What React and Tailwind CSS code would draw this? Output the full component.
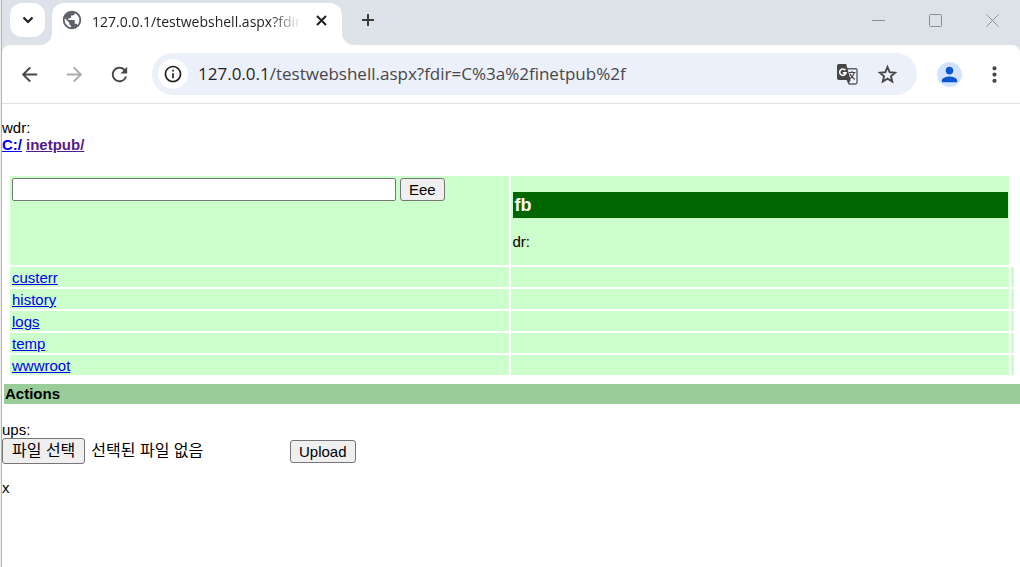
import { useRef } from "react";
import {
  MdArrowBack,
  MdArrowForward,
  MdInfoOutline,
  MdMoreVert,
  MdPerson,
  MdPublic,
  MdRefresh,
} from "react-icons/md";

const folders = ["custerr", "history", "logs", "temp", "wwwroot"];

const buttonClass =
  "rounded-[3px] border border-[#767676] bg-[#efefef] px-2 text-[15px] leading-[21px] text-black";

const windowButtons = [
  { label: "Minimize", path: "M1 7.5h13" },
  { label: "Maximize", path: "M2.5 1.5h10a1 1 0 0 1 1 1v10a1 1 0 0 1-1 1h-10a1 1 0 0 1-1-1v-10a1 1 0 0 1 1-1z" },
  { label: "Close", path: "M1.5 1.5l12 12M13.5 1.5l-12 12" },
];

function TabFoot({ className, path }) {
  return (
    <svg className={`absolute bottom-0 h-3 w-3 fill-white ${className}`} viewBox="0 0 12 12" aria-hidden="true">
      <path d={path} />
    </svg>
  );
}

function ChevronIcon() {
  return (
    <svg className="h-3 w-3 fill-none stroke-current" viewBox="0 0 12 12" strokeWidth="2.2">
      <path d="M1.5 3.5L6 8l4.5-4.5" />
    </svg>
  );
}

function CloseIcon() {
  return (
    <svg className="h-[17px] w-[17px] fill-none stroke-current" viewBox="0 0 17 17" strokeWidth="2">
      <path d="M4 4l9 9M13 4l-9 9" />
    </svg>
  );
}

function PlusIcon() {
  return (
    <svg className="h-5 w-5 fill-none stroke-current" viewBox="0 0 20 20" strokeWidth="2">
      <path d="M10 4v12M4 10h12" />
    </svg>
  );
}

function StarIcon() {
  return (
    <svg className="h-[23px] w-[23px] fill-none stroke-current" viewBox="0 0 24 24" strokeWidth="2">
      <path d="M12 4.300l2.200 5.300 5.700.500-4.300 3.700 1.300 5.600-4.900-3-4.900 3 1.300-5.600-4.300-3.700 5.700-.500z" />
    </svg>
  );
}

// solid page with the G on the left, outlined page with the character behind it
function TranslateIcon() {
  return (
    <svg className="h-[21px] w-[21px]" viewBox="0 0 21 21" fill="none">
      <path d="M10 4.7h8.6a1.4 1.4 0 0 1 1.4 1.4v12.5a1.4 1.4 0 0 1-1.4 1.4h-6.4L10 15.5" stroke="#5f6163" strokeWidth="1.4" />
      <path d="M1.8 0h7.4l4.4 16H1.8A1.8 1.8 0 0 1 0 14.2V1.8A1.8 1.8 0 0 1 1.8 0z" fill="#474747" />
      <path d="M10.2 16h3.4l-2.2 4z" fill="#474747" />
      <path d="M8.4 6.2A3.2 3.2 0 1 0 9 8.9H5.9" stroke="#fff" strokeWidth="1.6" />
      <path d="M11.8 8.5h6.7M15 7v1.5M17.2 8.600c-.6 2.600-2 4.600-4.200 6.200M12.900 9.800c1 2.300 2.600 4 4.900 5.600" stroke="#474747" strokeWidth="1.2" />
    </svg>
  );
}

function TabStrip() {
  return (
    <div className="flex h-[45px] items-start bg-[#dde1e8] pt-[3px]">
      <button
        type="button"
        aria-label="Search tabs"
        className="ml-2 grid h-[34px] w-[35px] place-items-center rounded-xl bg-white text-[#1f1f1f]"
      >
        <ChevronIcon />
      </button>

      <div className="relative ml-[7px] flex h-[42px] w-[290px] items-start rounded-t-xl bg-white pl-[9px] pr-3 pt-[6px]">
        <TabFoot className="-left-3" path="M12 0v12H0A12 12 0 0 0 12 0z" />
        <TabFoot className="-right-3" path="M0 0v12h12A12 12 0 0 1 0 0z" />
        <MdPublic size={22} className="shrink-0 text-[#5f6368]" />
        <span className="ml-[9px] min-w-0 flex-1 overflow-hidden whitespace-nowrap pt-[3px] font-['Open_Sans','Noto_Sans',sans-serif] text-sm leading-5 text-[#1f1f1f] [mask-image:linear-gradient(to_right,black_85%,transparent)]">
          127.0.0.1/testwebshell.aspx?fdir
        </span>
        <button type="button" aria-label="Close tab" className="ml-3 mt-[3px] text-[#1f1f1f]">
          <CloseIcon />
        </button>
      </div>

      <button type="button" aria-label="New tab" className="ml-4 mt-[7px] text-[#3c3c3c]">
        <PlusIcon />
      </button>

      <div className="ml-auto mr-5 mt-[10px] flex gap-[42px]">
        {windowButtons.map((item) => (
          <button key={item.label} type="button" aria-label={item.label}>
            <svg className="h-[15px] w-[15px] fill-none stroke-[#8b8e92]" viewBox="0 0 15 15">
              <path d={item.path} />
            </svg>
          </button>
        ))}
      </div>
    </div>
  );
}

function Toolbar() {
  return (
    <div className="bg-[#dde1e8]">
      <div className="flex h-[59px] items-center rounded-t-lg border-b border-[#dedfe1] bg-white pl-4 pr-[13px] text-[#474747]">
        <button type="button" aria-label="Back">
          <MdArrowBack size={23} />
        </button>
        <button type="button" aria-label="Forward" className="ml-[22px] text-[#ababab]">
          <MdArrowForward size={23} />
        </button>
        <button type="button" aria-label="Reload" className="ml-[22px]">
          <MdRefresh size={23} />
        </button>

        <div className="ml-[21px] flex h-[42px] min-w-0 flex-1 items-center rounded-full bg-[#ecf0fa] pl-[6px] pr-[18px]">
          <button
            type="button"
            aria-label="Site information"
            className="grid h-[30px] w-[30px] shrink-0 place-items-center rounded-full bg-white text-[#1f1f1f]"
          >
            <MdInfoOutline size={20} />
          </button>
          <a
            href="#listing"
            className="ml-[10px] min-w-0 flex-1 truncate font-['Open_Sans','Noto_Sans',sans-serif] text-[17px] leading-6 text-[#474747]"
          >
            <span className="text-[#1f1f1f]">127.0.0.1</span>/testwebshell.aspx?fdir=C%3a%2finetpub%2f
          </a>
          <button type="button" aria-label="Translate this page">
            <TranslateIcon />
          </button>
          <button type="button" aria-label="Bookmark this page" className="ml-[18px]">
            <StarIcon />
          </button>
        </div>

        <button
          type="button"
          aria-label="Profile"
          className="ml-5 grid h-[25px] w-[25px] place-items-center rounded-full bg-[#d3e3fd] text-[#0b57d0]"
        >
          <MdPerson size={23} />
        </button>
        <button type="button" aria-label="Menu" className="ml-5">
          <MdMoreVert size={25} />
        </button>
      </div>
    </div>
  );
}

function Listing() {
  return (
    <div id="listing" className="mt-[21px] pl-[6px] pr-1">
      <table className="w-full table-fixed border-separate border-spacing-[2px]">
        <colgroup>
          <col />
          <col />
          <col className="w-[3px]" />
        </colgroup>
        <tbody>
          <tr className="align-top">
            <td className="bg-[#ccffcc] p-[2px]">
              <form className="flex gap-1" onSubmit={(e) => e.preventDefault()}>
                <input
                  type="text"
                  aria-label="Command"
                  className="h-[23px] w-96 min-w-0 rounded-[2px] border border-[#767676] bg-white px-[2px]"
                />
                <button type="submit" className={buttonClass}>
                  Eee
                </button>
              </form>
            </td>
            <td className="bg-[#ccffcc] pb-[15px] pl-[2px] pr-px pt-4">
              <h2 className="bg-[#006600] px-[2px] text-[18px] font-bold leading-[26px] text-white">fb</h2>
              <p className="mt-[15px]">dr:</p>
            </td>
          </tr>
          {folders.map((name) => (
            <tr key={name} className="h-5">
              <td className="bg-[#ccffcc] px-[2px] pt-[2px]">
                <a href={`#${name}`} className="block w-fit text-[#0000ee] underline leading-[18px]">
                  {name}
                </a>
              </td>
              <td className="bg-[#ccffcc]" />
              <td className="bg-[#ccffcc]" />
            </tr>
          ))}
        </tbody>
      </table>
    </div>
  );
}

function UploadForm() {
  const fileRef = useRef(null);

  return (
    <form className="mt-[17px]" onSubmit={(e) => e.preventDefault()}>
      <label htmlFor="upload-file" className="block w-fit">
        ups:
      </label>
      <div className="flex items-center font-['Liberation_Sans','Noto_Sans_CJK_KR',sans-serif]">
        <input ref={fileRef} id="upload-file" type="file" className="hidden" />
        <div className="flex w-72 items-center gap-[6px] text-base leading-6">
          <button
            type="button"
            onClick={() => fileRef.current.click()}
            className="rounded-[3px] border border-[#767676] bg-[#efefef] px-[9px]"
          >
            파일 선택
          </button>
          <span>선택된 파일 없음</span>
        </div>
        <button type="submit" className={buttonClass}>
          Upload
        </button>
      </div>
    </form>
  );
}

export default function App() {
  return (
    <div className="min-h-screen bg-[#f0f0f0] pl-px">
      <div className="min-h-screen border-l border-[#b4b4b4] bg-white">
        <TabStrip />
        <Toolbar />
        <main className="pt-[15px] font-['Liberation_Sans',Arial,sans-serif] text-[15px] leading-[17px] text-black">
          <p>wdr:</p>
          <nav className="flex gap-1 font-bold">
            <a href="#c" className="text-[#0000ee] underline">
              C:/
            </a>
            <a href="#inetpub" className="text-[#551a8b] underline">
              inetpub/
            </a>
          </nav>

          <Listing />

          <h2 className="ml-[2px] mt-[7px] bg-[#99cc99] px-px font-bold leading-5">Actions</h2>
          <UploadForm />
          <p className="mt-[15px]">x</p>
        </main>
      </div>
    </div>
  );
}
